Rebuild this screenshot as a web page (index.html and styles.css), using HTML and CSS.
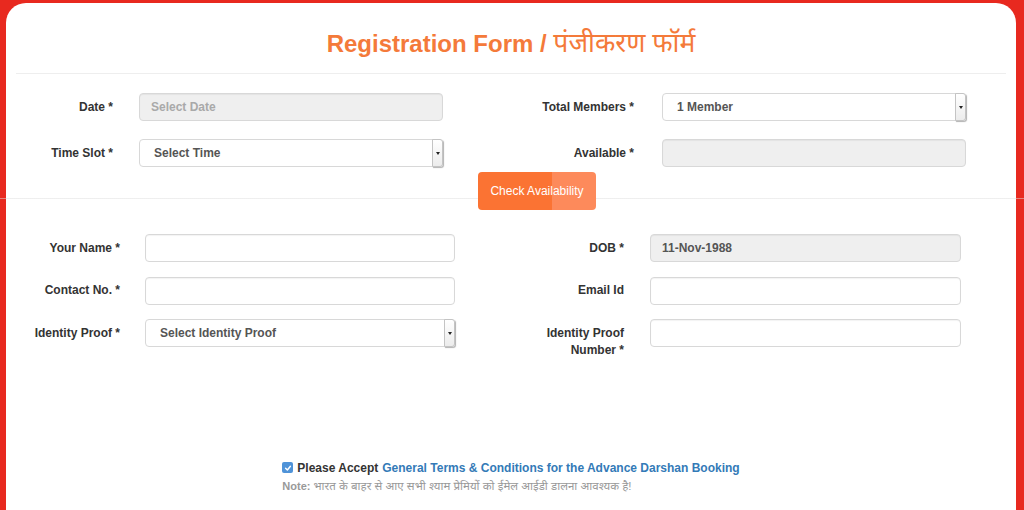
FILE: index.html
```html
<!DOCTYPE html>
<html lang="en">
<head>
<meta charset="utf-8">
<title>Registration Form</title>
<link rel="stylesheet" href="styles.css">
</head>
<body>
<div class="card">
  <header class="head">
    <h1 class="title">Registration Form / <span class="hi">पंजीकरण फॉर्म</span></h1>
  </header>

  <section class="grid grid-a">
    <label class="lbl">Date *</label>
    <div class="field readonly"><span class="ph">Select Date</span></div>
    <label class="lbl">Total Members *</label>
    <div class="field select"><span class="val">1 Member</span><span class="arrow"></span></div>

    <label class="lbl">Time Slot *</label>
    <div class="field select"><span class="val">Select Time</span><span class="arrow"></span></div>
    <label class="lbl">Available *</label>
    <div class="field readonly"></div>
  </section>

  <div class="btn-row"><button class="btn" type="button">Check Availability</button></div>

  <section class="grid grid-b">
    <label class="lbl">Your Name *</label>
    <div class="field"></div>
    <label class="lbl">DOB *</label>
    <div class="field readonly"><span class="val">11-Nov-1988</span></div>

    <label class="lbl">Contact No. *</label>
    <div class="field"></div>
    <label class="lbl">Email Id</label>
    <div class="field"></div>

    <label class="lbl">Identity Proof *</label>
    <div class="field select"><span class="val">Select Identity Proof</span><span class="arrow"></span></div>
    <label class="lbl">Identity Proof<br>Number *</label>
    <div class="field"></div>
  </section>

  <div class="terms">
    <div class="terms-box">
      <p class="accept">
        <span class="check"><svg viewBox="0 0 10 10" width="8" height="8"><path d="M2 5.2 L4.2 7.4 L8 2.8" fill="none" stroke="#fff" stroke-width="1.8" stroke-linecap="round" stroke-linejoin="round"/></svg></span>
        Please Accept <a class="link" href="#">General Terms &amp; Conditions for the Advance Darshan Booking</a>
      </p>
      <p class="note"><b>Note:</b> <span class="note-hi">भारत के बाहर से आए सभी श्याम प्रेमियों को ईमेल आईडी डालना आवश्यक है!</span></p>
    </div>
  </div>
</div>
</body>
</html>
```

FILE: styles.css
```css
* { box-sizing: border-box; }

html, body {
  margin: 0;
  height: 100%;
}

body {
  background: #e8291f;
  padding: 3px 8px 0 6px;
  font-family: "Liberation Sans", Arial, "Noto Sans Devanagari", "Noto Sans", sans-serif;
  color: #333;
  overflow: hidden;
}

.card {
  background: #fff;
  border-radius: 20px 20px 0 0;
  min-height: 100%;
  padding: 0 10px;
}

.head {
  padding: 26px 0 14px;
  border-bottom: 1px solid #eeeeee;
}

.title {
  margin: 0;
  height: 30px;
  text-align: center;
  font-size: 24px;
  line-height: 30px;
  font-weight: bold;
  color: #f47a3a;
  white-space: nowrap;
}

.title .hi {
  font-weight: normal;
  font-size: 26.5px;
  line-height: 20px;
  font-family: "Noto Sans Devanagari", "Noto Sans", "Lohit Devanagari", "FreeSans", sans-serif;
}

.grid {
  display: grid;
  align-items: start;
}

.grid-a {
  padding-top: 19px;
  grid-template-columns: 123px 304px 219px 304px;
  row-gap: 18px;
}

.grid-b {
  margin-top: 24px;
  grid-template-columns: 129px 310px 195px 311px;
  row-gap: 14.5px;
}

.lbl {
  display: block;
  text-align: right;
  font-size: 12px;
  font-weight: bold;
  line-height: 17px;
  padding-top: 5.5px;
  color: #333;
}

.grid-a .lbl:nth-child(4n+1) { padding-right: 26px; }
.grid-a .lbl:nth-child(4n+3) { padding-right: 28px; }
.grid-b .lbl:nth-child(4n+1) { padding-right: 25px; }
.grid-b .lbl:nth-child(4n+3) { padding-right: 26px; }

.field {
  height: 28px;
  border: 1px solid #d8d8d8;
  border-radius: 4px;
  background: #fff;
  box-shadow: inset 0 1px 1px rgba(0, 0, 0, 0.05);
  display: flex;
  align-items: center;
  padding-left: 11px;
  font-size: 12px;
  font-weight: bold;
  color: #555;
}

.field.readonly {
  background: #efefef;
}

.ph { color: #a9a9a9; }

.field.select {
  padding-left: 14px;
  padding-right: 0;
  box-shadow: none;
}

.field.select .val { flex: 1; }

.arrow {
  width: 11px;
  height: 28px;
  margin: -1px -1px -1px 0;
  border: 1px solid #c4c4c4;
  border-radius: 0 3px 3px 0;
  background: linear-gradient(#ffffff, #ececec);
  box-shadow: 1px 1px 1px rgba(0, 0, 0, 0.3);
  display: flex;
  align-items: center;
  justify-content: center;
}

.arrow::after {
  content: "";
  border-left: 2.5px solid transparent;
  border-right: 2.5px solid transparent;
  border-top: 3px solid #222;
}

.btn-row {
  margin: 5px -18px 0 -16px;
  height: 38px;
  background: linear-gradient(rgba(222, 222, 222, 0.5), rgba(222, 222, 222, 0.5)) no-repeat 0 26px / 100% 1px;
}

.btn {
  display: block;
  margin-left: 478px;
  width: 118px;
  height: 38px;
  border: 0;
  border-radius: 4px;
  padding: 0;
  background: linear-gradient(to right, #fb7333 0, #fb7333 74px, #fd8a5b 74px, #fd8a5b 100%);
  color: #fff;
  font-family: "Liberation Sans", Arial, sans-serif;
  font-size: 12px;
}

.terms {
  margin-top: 100px;
  display: flex;
  justify-content: center;
}

.terms-box p {
  margin: 0;
  line-height: 18px;
}

.accept {
  font-size: 12px;
  font-weight: bold;
  color: #333;
  display: flex;
  align-items: center;
  white-space: nowrap;
}

.check {
  width: 11px;
  height: 11px;
  border-radius: 2px;
  background: #4f93d8;
  display: inline-flex;
  align-items: center;
  justify-content: center;
  margin-right: 4px;
}

.link {
  color: #337ab7;
  text-decoration: none;
  margin-left: 4px;
}

.note {
  font-size: 11px;
  color: #999;
  white-space: nowrap;
}

.note b { color: #999; }

.note-hi {
  font-size: 11.5px;
}
```
